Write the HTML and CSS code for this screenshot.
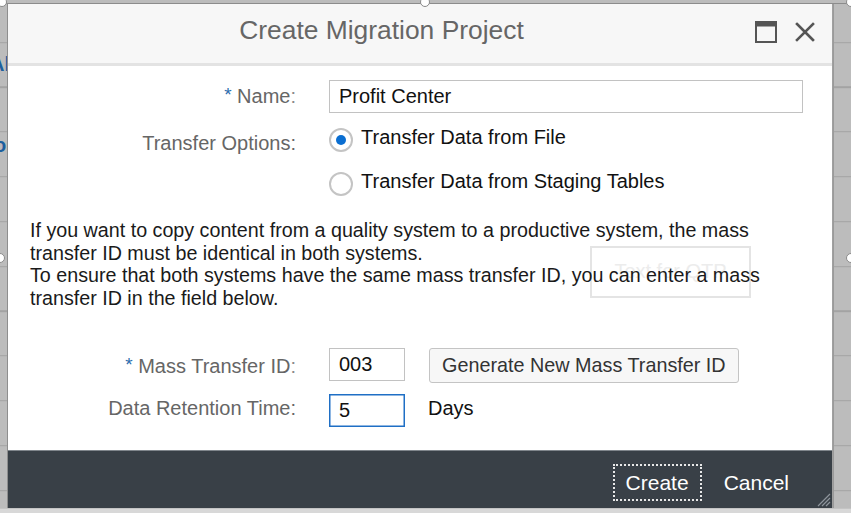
FILE: index.html
```html
<!DOCTYPE html>
<html lang="en">
<head>
<meta charset="utf-8">
<title>Create Migration Project</title>
<link rel="stylesheet" href="styles.css">
</head>
<body>
<div class="bg-frag frag-a">Al</div>
<div class="bg-frag frag-b">o</div>
<div class="page-bottom"></div>

<div class="dialog">
  <header class="dlg-header">
    <h1 class="dlg-title">Create Migration Project</h1>
    <div class="dlg-tools">
      <svg class="ico" width="22" height="22" viewBox="0 0 22 22"><rect x="1" y="1" width="20" height="20" fill="none" stroke="#555" stroke-width="2"/><rect x="1" y="1" width="20" height="4.5" fill="#555"/></svg>
      <svg class="ico" width="20" height="20" viewBox="0 0 20 20"><path d="M2 2 L18 18 M18 2 L2 18" stroke="#555" stroke-width="2.6" stroke-linecap="square"/></svg>
    </div>
  </header>

  <div class="dlg-body">
    <div class="row row-name">
      <div class="lbl"><span class="req">*</span> Name<span class="colon">:</span></div>
      <div class="field"><div class="input input-wide">Profit Center</div></div>
    </div>

    <div class="row row-options">
      <div class="lbl lbl-top">Transfer Options:</div>
      <div class="radios">
        <div class="radio"><span class="rb rb-on"></span><span class="rtext">Transfer Data from File</span></div>
        <div class="radio"><span class="rb"></span><span class="rtext">Transfer Data from Staging Tables</span></div>
      </div>
    </div>

    <div class="info">
      <div class="ghost">Text for QTP</div>
      <p class="para">If you want to copy content from a quality system to a productive system, the mass transfer ID must be identical in both systems.<br>To ensure that both systems have the same mass transfer ID, you can enter a mass transfer ID in the field below.</p>
    </div>

    <div class="row row-mass">
      <div class="lbl"><span class="req">*</span> Mass Transfer ID<span class="colon">:</span></div>
      <div class="field field-inline">
        <div class="input input-short">003</div>
        <div class="btn">Generate New Mass Transfer ID</div>
      </div>
    </div>

    <div class="row row-ret">
      <div class="lbl">Data Retention Time:</div>
      <div class="field field-inline">
        <div class="input input-short input-focus">5</div>
        <span class="unit">Days</span>
      </div>
    </div>
  </div>

  <footer class="dlg-footer">
    <div class="fbtn fbtn-focus">Create</div>
    <div class="fbtn">Cancel</div>
    <svg class="grip" width="16" height="16" viewBox="0 0 16 16"><path d="M15 3 L3 15 M15 7 L7 15 M15 11 L11 15" stroke="#8d949b" stroke-width="1.2"/></svg>
  </footer>
</div>

<div class="sel-frame"></div>
<span class="handle h-tl"></span>
<span class="handle h-tm"></span>
<span class="handle h-tr"></span>
<span class="handle h-ml"></span>
<span class="handle h-mr"></span>
</body>
</html>
```

FILE: styles.css
```css
* { box-sizing: border-box; }

html, body {
  margin: 0;
  padding: 0;
}

body {
  width: 851px;
  height: 513px;
  overflow: hidden;
  position: relative;
  font-family: "Liberation Sans", Arial, sans-serif;
  background-color: #bcbcbc;
  background-image: repeating-linear-gradient(to bottom, transparent 0, transparent 43.6px, #a3a3a3 43.6px, #a3a3a3 44.8px);
  background-position: 0 -1.8px;
}

.bg-frag {
  position: absolute;
  color: #1d5f9e;
  font-size: 20px;
  font-weight: bold;
}
.frag-a { left: -10px; top: 53px; }
.frag-b { left: -6px; top: 134px; }

.page-bottom {
  position: absolute;
  left: 0;
  right: 0;
  bottom: 0;
  height: 5px;
  background: #d8d8d8;
  border-top: 1px solid #c4c4c4;
}

.dialog {
  position: absolute;
  left: 8px;
  top: 4px;
  width: 824px;
  height: 504px;
  display: flex;
  flex-direction: column;
  background: #fff;
  box-shadow: -1px 0 0 #8e8e8e, 1px 0 0 #a0a0a0, 2px 0 0 #9a9a9a;
}

.dlg-header {
  height: 62px;
  flex: none;
  background: #f7f7f7;
  border-bottom: 3px solid #e3e3e3;
  display: flex;
  align-items: center;
  padding: 0 17px 6px 0;
}

.dlg-title {
  flex: 1;
  margin: 0;
  text-align: center;
  font-size: 26.4px;
  font-weight: normal;
  color: #666;
}

.dlg-tools {
  display: flex;
  align-items: center;
  gap: 18px;
  padding-top: 2px;
}
.ico { display: block; }

.dlg-body {
  flex: 1;
  display: flex;
  flex-direction: column;
  padding: 14px 29px 0 22px;
  font-size: 20px;
}

.row {
  display: grid;
  grid-template-columns: 266px 1fr;
  column-gap: 33px;
  align-items: center;
}

.lbl {
  text-align: right;
  color: #666;
  font-size: 20px;
  white-space: nowrap;
}
.lbl-top {
  align-self: start;
  line-height: 50px;
}
.req {
  color: #2b6cad;
  font-size: 19px;
  position: relative;
  top: -2px;
}
.colon { color: #8a8a8a; }

.input {
  height: 33px;
  border: 1px solid #c2c2c2;
  background: #fff;
  color: #111;
  font-size: 20px;
  line-height: 31px;
  padding-left: 9px;
}
.input-short { width: 76px; }
.input-focus { border: 1px solid #1f6fc5; box-shadow: inset 0 0 0 0.5px #1f6fc5; }

.row-options { margin-top: 5px; align-items: start; }
.radios { display: flex; flex-direction: column; }
.radio {
  height: 44px;
  display: flex;
  align-items: center;
  gap: 8px;
  color: #111;
}
.rb {
  width: 24px;
  height: 24px;
  border-radius: 50%;
  border: 2px solid #c4c4c4;
  background: #fff;
  display: flex;
  align-items: center;
  justify-content: center;
}
.rb-on::after {
  content: "";
  width: 10px;
  height: 10px;
  border-radius: 50%;
  background: #0a6ed1;
}
.rtext { position: relative; top: -3px; }

.info {
  position: relative;
  margin-top: 13px;
}
.ghost {
  position: absolute;
  left: 560px;
  top: 27px;
  width: 161px;
  height: 52px;
  border: 2px solid #e4e4e4;
  color: #ececec;
  font-size: 20px;
  text-align: center;
  line-height: 46px;
}
.para {
  position: relative;
  margin: 0;
  font-size: 19.7px;
  line-height: 22.7px;
  color: #1a1a1a;
  width: 790px;
}

.row-mass { margin-top: 38px; align-items: start; }
.row-mass .lbl { line-height: 36px; }
.field-inline {
  display: flex;
  align-items: center;
  gap: 24px;
}
.row-mass .field-inline { align-items: start; }

.btn {
  height: 35px;
  padding: 0 12px;
  border: 1px solid #c4c4c4;
  border-radius: 3px;
  background: #f7f7f7;
  color: #333;
  font-size: 19.8px;
  line-height: 33px;
  white-space: nowrap;
}

.row-ret { margin-top: 9px; }
.row-ret .lbl { position: relative; top: -2px; }
.unit { color: #111; margin-left: -1px; position: relative; top: -2px; }

.dlg-footer {
  height: 58px;
  flex: none;
  position: relative;
  background: #394047;
  border-top: 1px solid #80868c;
  display: flex;
  justify-content: flex-end;
  align-items: flex-start;
  gap: 8px;
  padding: 13px 29px 0 0;
}
.fbtn {
  height: 37px;
  padding: 0 12px;
  border: 2px solid transparent;
  color: #fff;
  font-size: 21px;
  line-height: 33px;
}
.fbtn-focus { border: 2px dotted #e8e8e8; padding: 0 11px; }

.grip {
  position: absolute;
  right: 1px;
  bottom: 1px;
}

.sel-frame {
  position: absolute;
  left: 0;
  top: 3px;
  width: 851px;
  height: 1px;
  background: #8c8c8c;
}
.handle {
  position: absolute;
  width: 10px;
  height: 10px;
  border-radius: 50%;
  border: 1.5px solid #8a8a8a;
  background: #fff;
}
.h-tl { left: -3px; top: -3px; }
.h-tm { left: 420px; top: -3px; }
.h-tr { left: 846px; top: -3px; }
.h-ml { left: -5px; top: 253px; }
.h-mr { left: 846px; top: 253px; }
```
